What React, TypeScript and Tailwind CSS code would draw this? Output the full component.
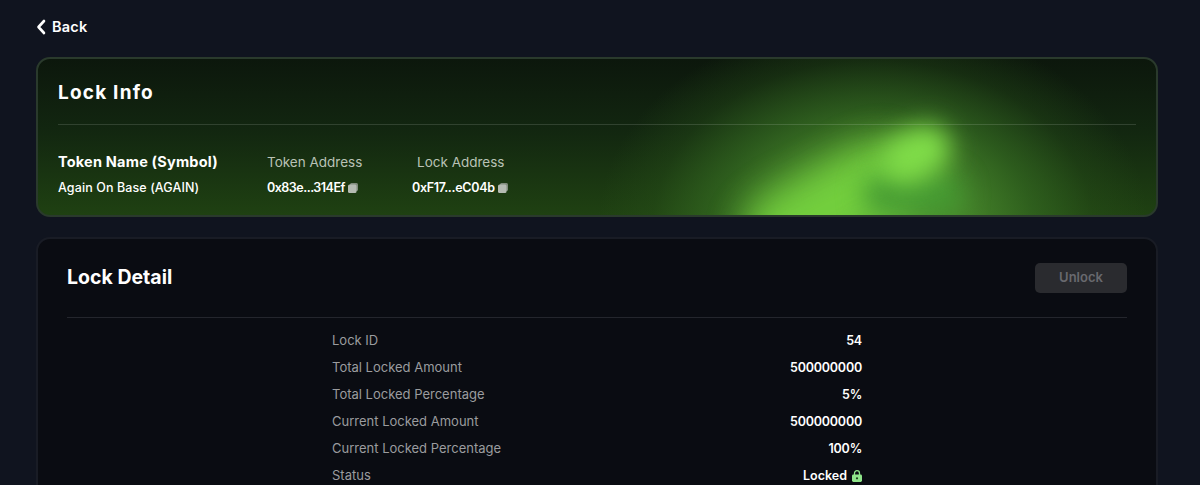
const rows = [
  { label: "Lock ID", value: "54" },
  { label: "Total Locked Amount", value: "500000000" },
  { label: "Total Locked Percentage", value: "5%" },
  { label: "Current Locked Amount", value: "500000000" },
  { label: "Current Locked Percentage", value: "100%" },
];

function CopyIcon() {
  return (
    <svg width="10" height="10" viewBox="0 0 10 10" className="shrink-0">
      <rect x="2" y="0" width="8" height="8" rx="1.5" fill="#7f8a7c" />
      <rect x="0" y="1.5" width="8.5" height="8.5" rx="1.5" fill="#b4bab2" />
    </svg>
  );
}

function LockIcon() {
  return (
    <svg width="10" height="12" viewBox="0 0 10 12" className="shrink-0">
      <path d="M2.5 5V3.2a2.5 2.5 0 0 1 5 0V5" fill="none" stroke="#8fe58a" strokeWidth="1.3" />
      <rect x="0" y="4.6" width="10" height="7.4" rx="1.4" fill="#8fe58a" />
      <circle cx="5" cy="8.3" r="1.1" fill="#1c3a1a" />
    </svg>
  );
}

export default function App() {
  return (
    <div className="h-[485px] overflow-hidden bg-[#10141f] pr-[42px] pl-9 font-['Inter',sans-serif] text-white">
      <div className="flex h-[57px] items-start pt-[18px]">
        <button type="button" className="flex items-center gap-[6px] text-[14.5px] leading-[18px] font-semibold tracking-[0.2px]">
          <svg width="10" height="16" viewBox="0 0 10 16" fill="none">
            <path d="M8 2 2.5 8 8 14" stroke="white" strokeWidth="2.6" strokeLinecap="round" strokeLinejoin="round" />
          </svg>
          Back
        </button>
      </div>

      <section className="relative h-40 overflow-hidden rounded-[14px] border-2 border-[#2a3a2c] bg-[radial-gradient(ellipse_275px_205px_at_835px_165px,#549c32_0%,#4a8c2df0_30%,#366e22b0_58%,#2a571a50_80%,#2a571a00_100%),linear-gradient(180deg,#0c170c_0%,#122610_45%,#1f4112_100%)] px-5">
        {/* glow */}
        <div className="absolute top-[108px] left-[700px] h-[80px] w-[185px] -rotate-[28deg] rounded-full bg-[#78d640] opacity-90 blur-[18px]" />
        <div className="absolute top-[115px] left-[825px] h-[40px] w-[100px] rounded-full bg-[#459a32] blur-[13px]" />
        <div className="absolute top-[70px] left-[842px] h-[50px] w-[72px] -rotate-[25deg] rounded-full bg-[#7fdc48] blur-[12px]" />

        <div className="relative">
          <h2 className="flex h-[66px] items-center border-b border-[#ffffff22] pt-[3px] text-[19px] font-bold tracking-[1.2px]">
            Lock Info
          </h2>
          <div className="mt-[27px] flex">
            <div className="w-[209px]">
              <div className="text-[14.5px] leading-[20px] font-bold tracking-[0.2px]">Token Name (Symbol)</div>
              <div className="mt-[7px] text-[12.5px] leading-[18px] font-medium tracking-[0.1px]">Again On Base (AGAIN)</div>
            </div>
            <div className="w-[145px]">
              <div className="text-[13.5px] leading-[20px] text-[#b9c2b6]">Token Address</div>
              <div className="mt-[7px] flex items-center gap-[3px] text-[12.5px] leading-[18px] font-semibold tracking-[-0.5px]">
                0x83e...314Ef <CopyIcon />
              </div>
            </div>
            <div>
              <div className="pl-[5px] text-[13.5px] leading-[20px] text-[#b9c2b6]">Lock Address</div>
              <div className="mt-[7px] flex items-center gap-[3px] text-[12.5px] leading-[18px] font-semibold tracking-[-0.3px]">
                0xF17...eC04b <CopyIcon />
              </div>
            </div>
          </div>
        </div>
      </section>

      <section className="mt-5 h-[400px] rounded-[14px] border-2 border-[#191c25] bg-[#0a0c12] px-[29px]">
        <div className="flex h-[79px] items-center justify-between border-b border-[#24262d]">
          <h2 className="text-[19.5px] font-bold">Lock Detail</h2>
          <button type="button" disabled className="h-[30px] w-[92px] rounded-[5px] bg-[#2a2b2f] text-[13px] font-semibold text-[#68696e]">
            Unlock
          </button>
        </div>
        <dl className="mx-auto mt-[9px] w-[530px] text-[13px] leading-[27px]">
          {rows.map((r) => (
            <div key={r.label} className="flex justify-between">
              <dt className="text-[#9b9c9f]">{r.label}</dt>
              <dd className="text-[12.5px] font-semibold tracking-[-0.2px]">{r.value}</dd>
            </div>
          ))}
          <div className="flex justify-between">
            <dt className="text-[#9b9c9f]">Status</dt>
            <dd className="flex items-center gap-[5px] text-[12.5px] font-semibold">
              Locked <LockIcon />
            </dd>
          </div>
        </dl>
      </section>
    </div>
  );
}
